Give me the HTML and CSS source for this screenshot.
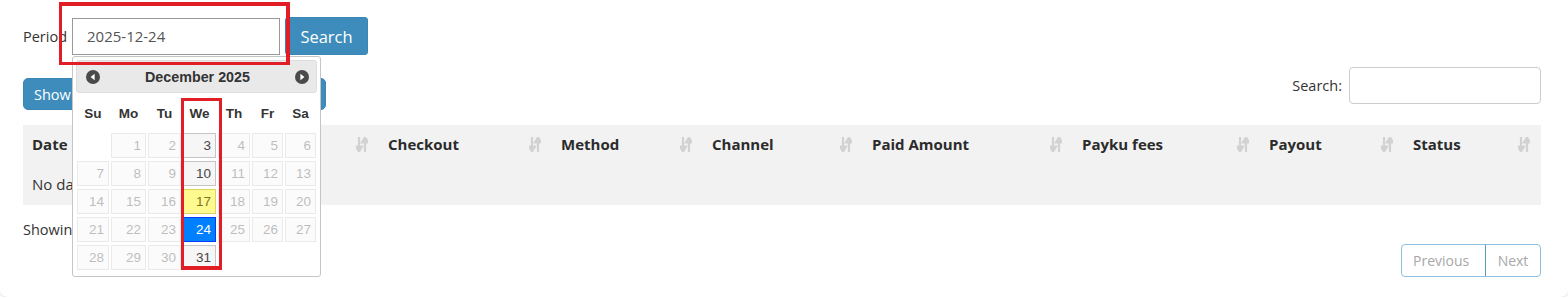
FILE: index.html
```html
<!DOCTYPE html>
<html lang="en">
<head>
    <meta charset="UTF-8">
    <title>Payments</title>
    <link rel="stylesheet" href="styles.css">
</head>
<body>
    <div class="card">
        <form class="period-form">
            <label class="period-label" for="period">Period</label>
            <input type="text" id="period" class="period-input" value="2025-12-24">
            <button type="button" class="btn-blue btn-search">Search</button>
        </form>

        <div class="toolbar">
            <button type="button" class="btn-blue btn-show">Show 10 rows</button>
            <label class="dt-search">Search: <input type="search"></label>
        </div>

        <table class="dt">
            <colgroup>
                <col style="width:356px"><col style="width:173px"><col style="width:151px"><col style="width:160px">
                <col style="width:210px"><col style="width:187px"><col style="width:144px"><col style="width:137px">
            </colgroup>
            <thead>
                <tr>
                    <th><div class="th-in"><span>Date</span><svg class="sort" viewBox="0 0 12 15"><path d="M3 0v10M0 9.5h6L3 14.5z"/><path d="M9 5v10M6 5.5h6L9 .5z"/></svg></div></th>
                    <th><div class="th-in"><span>Checkout</span><svg class="sort" viewBox="0 0 12 15"><path d="M3 0v10M0 9.5h6L3 14.5z"/><path d="M9 5v10M6 5.5h6L9 .5z"/></svg></div></th>
                    <th><div class="th-in"><span>Method</span><svg class="sort" viewBox="0 0 12 15"><path d="M3 0v10M0 9.5h6L3 14.5z"/><path d="M9 5v10M6 5.5h6L9 .5z"/></svg></div></th>
                    <th><div class="th-in"><span>Channel</span><svg class="sort" viewBox="0 0 12 15"><path d="M3 0v10M0 9.5h6L3 14.5z"/><path d="M9 5v10M6 5.5h6L9 .5z"/></svg></div></th>
                    <th><div class="th-in"><span>Paid Amount</span><svg class="sort" viewBox="0 0 12 15"><path d="M3 0v10M0 9.5h6L3 14.5z"/><path d="M9 5v10M6 5.5h6L9 .5z"/></svg></div></th>
                    <th><div class="th-in"><span>Payku fees</span><svg class="sort" viewBox="0 0 12 15"><path d="M3 0v10M0 9.5h6L3 14.5z"/><path d="M9 5v10M6 5.5h6L9 .5z"/></svg></div></th>
                    <th><div class="th-in"><span>Payout</span><svg class="sort" viewBox="0 0 12 15"><path d="M3 0v10M0 9.5h6L3 14.5z"/><path d="M9 5v10M6 5.5h6L9 .5z"/></svg></div></th>
                    <th><div class="th-in"><span>Status</span><svg class="sort" viewBox="0 0 12 15"><path d="M3 0v10M0 9.5h6L3 14.5z"/><path d="M9 5v10M6 5.5h6L9 .5z"/></svg></div></th>
                </tr>
            </thead>
            <tbody>
                <tr><td colspan="8" class="empty">No data available in table</td></tr>
            </tbody>
        </table>

        <div class="dt-footer">
            <div class="dt-info">Showing 0 to 0 of 0 entries</div>
            <div class="paginate">
                <a class="page-btn prev">Previous</a>
                <a class="page-btn next">Next</a>
            </div>
        </div>

        <!-- datepicker popup -->
        <div class="datepicker">
            <div class="dp-header">
                <span class="dp-nav"><svg viewBox="0 0 14 14"><circle cx="7" cy="7" r="7"/><path d="M8.6 3.8v6.4L4.6 7z"/></svg></span>
                <span class="dp-title">December 2025</span>
                <span class="dp-nav"><svg viewBox="0 0 14 14"><circle cx="7" cy="7" r="7"/><path d="M5.4 3.8v6.4L9.4 7z"/></svg></span>
            </div>
            <div class="dp-grid dp-names">
                <span>Su</span><span>Mo</span><span>Tu</span><span>We</span><span>Th</span><span>Fr</span><span>Sa</span>
            </div>
            <div class="dp-grid dp-days">
                <span></span><a class="off">1</a><a class="off">2</a><a>3</a><a class="off">4</a><a class="off">5</a><a class="off">6</a>
                <a class="off">7</a><a class="off">8</a><a class="off">9</a><a>10</a><a class="off">11</a><a class="off">12</a><a class="off">13</a>
                <a class="off">14</a><a class="off">15</a><a class="off">16</a><a class="today">17</a><a class="off">18</a><a class="off">19</a><a class="off">20</a>
                <a class="off">21</a><a class="off">22</a><a class="off">23</a><a class="active">24</a><a class="off">25</a><a class="off">26</a><a class="off">27</a>
                <a class="off">28</a><a class="off">29</a><a class="off">30</a><a>31</a>
            </div>
        </div>

        <div class="mark mark-input"></div>
        <div class="mark mark-col"></div>
    </div>
</body>
</html>
```

FILE: styles.css
```css
body {
    margin: 0;
    background: #fff;
    font-family: "Open Sans", sans-serif;
    color: #333;
}

.card {
    position: relative;
    box-sizing: border-box;
    height: 297px;
    padding: 17px 27px 0 23px;
    background: #fff;
    border-radius: 0 0 7px 7px;
    box-shadow: 0 1px 2px rgba(0, 0, 0, 0.13);
}

.btn-blue {
    background: #3d8cbc;
    border: 1px solid #3a86b5;
    color: #fff;
    font-family: "Open Sans", sans-serif;
    cursor: pointer;
}

/* period form */
.period-form {
    display: flex;
    align-items: center;
    margin: 0;
}
.period-label {
    width: 49px;
    font-size: 14.5px;
    color: #333;
}
.period-input {
    box-sizing: border-box;
    width: 208px;
    height: 37px;
    padding: 0 14px;
    border: 1px solid #999;
    font-family: "Open Sans", sans-serif;
    font-size: 15px;
    color: #555;
    outline: none;
}
.btn-search {
    box-sizing: border-box;
    width: 83px;
    height: 38px;
    margin-left: 5px;
    border-radius: 3px;
    font-size: 16.5px;
}

/* toolbar */
.toolbar {
    display: flex;
    justify-content: space-between;
    align-items: flex-start;
    margin-top: 12px;
}
.btn-show {
    box-sizing: border-box;
    width: 303px;
    height: 32px;
    margin-top: 11px;
    padding: 0 10px;
    border-radius: 5px;
    font-size: 14.5px;
    text-align: left;
}
.dt-search {
    display: flex;
    align-items: center;
    gap: 7px;
    font-size: 14.5px;
    color: #333;
}
.dt-search input {
    box-sizing: border-box;
    width: 192px;
    height: 37px;
    border: 1px solid #ccc;
    border-radius: 4px;
    outline: none;
}

/* table */
.dt {
    width: 1518px;
    margin-top: 15px;
    border-collapse: collapse;
    table-layout: fixed;
    background: #f2f2f2;
}
.dt th {
    height: 38px;
    padding: 0 11px 0 9px;
    text-align: left;
    font-size: 15px;
    font-weight: 700;
    color: #2b2b2b;
}
.th-in {
    display: flex;
    justify-content: space-between;
    align-items: center;
}
.sort {
    width: 12px;
    height: 15px;
}
.sort path {
    fill: #d2d2d2;
    stroke: #d2d2d2;
    stroke-width: 2.2;
}
.dt td.empty {
    height: 42px;
    padding: 0 9px;
    font-size: 15px;
    color: #333;
}

/* footer */
.dt-footer {
    display: flex;
    justify-content: space-between;
    align-items: flex-start;
}
.dt-info {
    margin-top: 15px;
    font-size: 14.5px;
}
.paginate {
    display: flex;
    margin-top: 39px;
    border: 1px solid #8cc0dc;
    border-radius: 4px;
}
.page-btn {
    box-sizing: border-box;
    height: 31px;
    line-height: 31px;
    font-size: 14px;
    color: #a8a8a8;
}
.prev {
    width: 84px;
    padding-left: 11px;
    border-right: 1px solid #5c9bc0;
}
.next {
    width: 54px;
    text-align: center;
}

/* datepicker */
.datepicker {
    position: absolute;
    left: 72px;
    top: 56px;
    box-sizing: border-box;
    width: 249px;
    height: 221px;
    padding: 3px;
    background: #fff;
    border: 1px solid #c5c5c5;
    border-radius: 3px;
    font-family: "Liberation Sans", Arial, sans-serif;
}
.dp-header {
    display: flex;
    justify-content: space-between;
    align-items: center;
    box-sizing: border-box;
    height: 33px;
    padding: 0 7px 0 9px;
    background: #e9e9e9;
    border: 1px solid #dddddd;
    border-radius: 3px;
}
.dp-title {
    font-size: 14.3px;
    font-weight: 700;
    color: #333;
}
.dp-nav svg {
    display: block;
    width: 14px;
    height: 14px;
}
.dp-nav circle { fill: #4a4a4a; }
.dp-nav path { fill: #fff; }

.dp-grid {
    display: grid;
    grid-template-columns: 32px 35px 33px 33px 32px 31px 31px;
    column-gap: 2px;
    margin: 0 1px;
}
.dp-names {
    height: 36px;
    margin-top: 2px;
    align-items: center;
    text-align: center;
    font-size: 13.5px;
    font-weight: 700;
    color: #333;
}
.dp-days {
    margin-top: 2px;
    row-gap: 3px;
}
.dp-days a {
    box-sizing: border-box;
    height: 25px;
    line-height: 23px;
    padding-right: 4px;
    text-align: right;
    font-size: 13.5px;
    background: #f6f6f6;
    border: 1px solid #c5c5c5;
    color: #454545;
}
.dp-days a.off {
    opacity: 0.35;
}
.dp-days a.today {
    background: #fffa90;
    border-color: #dad55e;
    color: #777620;
}
.dp-days a.active {
    background: #007fff;
    border-color: #003eff;
    color: #fff;
}

/* red annotation boxes */
.mark {
    position: absolute;
    box-sizing: border-box;
    border: 3px solid #e11d25;
}
.mark-input {
    left: 59px;
    top: 2px;
    width: 231px;
    height: 63px;
    border-width: 4px 4px 3px 3px;
}
.mark-col {
    left: 181px;
    top: 98px;
    width: 41px;
    height: 172px;
    border-width: 3px 3px 4px 3px;
}
```
